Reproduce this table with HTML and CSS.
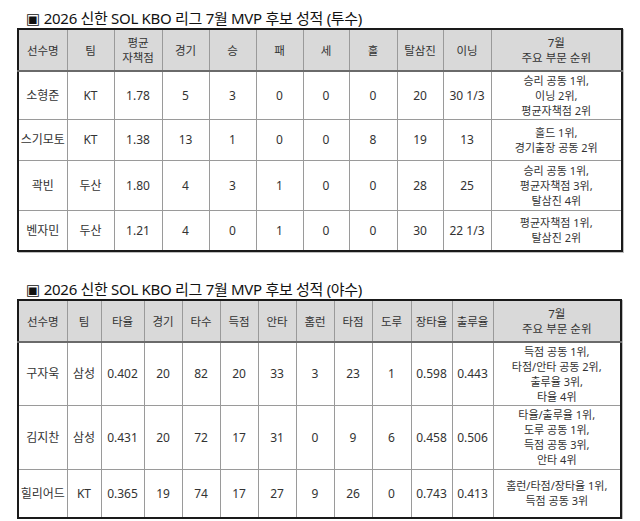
FILE: index.html
```html
<!DOCTYPE html>
<html lang="ko">
<head>
<meta charset="utf-8">
<link rel="stylesheet" href="styles.css">
</head>
<body>
<div class="page">
  <h2 class="title"><span class="mark">▣</span> 2026 신한 SOL KBO 리그 7월 MVP 후보 성적 (투수)</h2>
  <table class="stats pitch">
    <colgroup>
      <col style="width:49px"><col style="width:47px"><col style="width:48px"><col style="width:47px"><col style="width:47px"><col style="width:47px"><col style="width:46px"><col style="width:48px"><col style="width:46px"><col style="width:48px"><col style="width:131px">
    </colgroup>
    <thead>
      <tr class="h42"><th>선수명</th><th>팀</th><th>평균<br>자책점</th><th>경기</th><th>승</th><th>패</th><th>세</th><th>홀</th><th>탈삼진</th><th>이닝</th><th>7월<br>주요 부문 순위</th></tr>
    </thead>
    <tbody>
      <tr class="h48"><td>소형준</td><td>KT</td><td>1.78</td><td>5</td><td>3</td><td>0</td><td>0</td><td>0</td><td>20</td><td>30 1/3</td><td>승리 공동 1위,<br>이닝 2위,<br>평균자책점 2위</td></tr>
      <tr class="h41"><td>스기모토</td><td>KT</td><td>1.38</td><td>13</td><td>1</td><td>0</td><td>0</td><td>8</td><td>19</td><td>13</td><td>홀드 1위,<br>경기출장 공동 2위</td></tr>
      <tr class="h50"><td>곽빈</td><td>두산</td><td>1.80</td><td>4</td><td>3</td><td>1</td><td>0</td><td>0</td><td>28</td><td>25</td><td>승리 공동 1위,<br>평균자책점 3위,<br>탈삼진 4위</td></tr>
      <tr class="h41"><td>벤자민</td><td>두산</td><td>1.21</td><td>4</td><td>0</td><td>1</td><td>0</td><td>0</td><td>30</td><td>22 1/3</td><td>평균자책점 1위,<br>탈삼진 2위</td></tr>
    </tbody>
  </table>

  <h2 class="title second"><span class="mark">▣</span> 2026 신한 SOL KBO 리그 7월 MVP 후보 성적 (야수)</h2>
  <table class="stats bat">
    <colgroup>
      <col style="width:49px"><col style="width:34px"><col style="width:43px"><col style="width:38px"><col style="width:38px"><col style="width:38px"><col style="width:38px"><col style="width:38px"><col style="width:38px"><col style="width:39px"><col style="width:41px"><col style="width:41px"><col style="width:128px">
    </colgroup>
    <thead>
      <tr class="h42"><th>선수명</th><th>팀</th><th>타율</th><th>경기</th><th>타수</th><th>득점</th><th>안타</th><th>홈런</th><th>타점</th><th>도루</th><th>장타율</th><th>출루율</th><th>7월<br>주요 부문 순위</th></tr>
    </thead>
    <tbody>
      <tr class="h63"><td>구자욱</td><td>삼성</td><td>0.402</td><td>20</td><td>82</td><td>20</td><td>33</td><td>3</td><td>23</td><td>1</td><td>0.598</td><td>0.443</td><td>득점 공동 1위,<br>타점/안타 공동 2위,<br>출루율 3위,<br>타율 4위</td></tr>
      <tr class="h64"><td>김지찬</td><td>삼성</td><td>0.431</td><td>20</td><td>72</td><td>17</td><td>31</td><td>0</td><td>9</td><td>6</td><td>0.458</td><td>0.506</td><td>타율/출루율 1위,<br>도루 공동 1위,<br>득점 공동 3위,<br>안타 4위</td></tr>
      <tr class="h49"><td>힐리어드</td><td>KT</td><td>0.365</td><td>19</td><td>74</td><td>17</td><td>27</td><td>9</td><td>26</td><td>0</td><td>0.743</td><td>0.413</td><td>홈런/타점/장타율 1위,<br>득점 공동 3위</td></tr>
    </tbody>
  </table>
</div>
</body>
</html>
```

FILE: styles.css
```css
html, body {
  margin: 0;
  padding: 0;
  background: #ffffff;
}

.page {
  padding-top: 9px;
  font-family: "Noto Sans", "Noto Sans CJK KR", sans-serif;
  color: #333333;
}

.title {
  margin: 0 0 0 26px;
  height: 19px;
  line-height: 19px;
  font-size: 15px;
  font-weight: 400;
  color: #111111;
  letter-spacing: -0.3px;
  white-space: nowrap;
}

.mark {
  font-family: "DejaVu Sans", sans-serif;
  font-size: 15px;
  font-weight: 700;
  letter-spacing: 0;
}

.title.second {
  margin-top: 28px;
}

.stats {
  margin-left: 17px;
  border-collapse: collapse;
  table-layout: fixed;
  border: 2px solid #1a1a1a;
  box-shadow: 1px 1px 0 #bdbdbd;
}

.stats th,
.stats td {
  border: 1px solid #9a9a9a;
  padding: 0;
  text-align: center;
  vertical-align: middle;
  font-size: 11.5px;
  line-height: 15px;
  font-weight: 400;
  color: #333333;
  white-space: nowrap;
  overflow: hidden;
}

.stats td {
  font-size: 12px;
}

.stats td:last-child {
  font-size: 11px;
}

.stats thead th {
  background: #d9d9d9;
  border-bottom: 2px solid #6a6a6a;
}

.stats th:first-child,
.stats td:first-child {
  border-left: 2px solid #1a1a1a;
}

.stats th:last-child,
.stats td:last-child {
  border-right: 2px solid #1a1a1a;
}

.h41 { height: 41px; }
.h42 { height: 42px; }
.h48 { height: 48px; }
.h49 { height: 49px; }
.h50 { height: 50px; }
.h63 { height: 63px; }
.h64 { height: 64px; }
```
